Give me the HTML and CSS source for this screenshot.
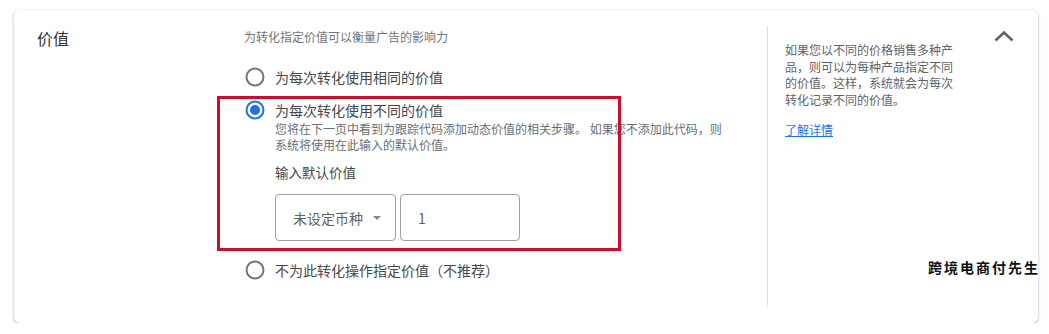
FILE: index.html
```html
<!DOCTYPE html>
<html lang="zh-CN">
<head>
<meta charset="utf-8">
<title>价值</title>
<link rel="stylesheet" href="styles.css">
</head>
<body>
<div class="card">
  <div class="label-col">价值</div>
  <div class="main">
    <div class="intro">为转化指定价值可以衡量广告的影响力</div>
    <div class="option opt1">
      <svg class="radio" viewBox="0 0 20 20" width="20" height="20"><circle cx="10" cy="10" r="8.5" fill="none" stroke="#757575" stroke-width="2"/></svg>
      <div class="opt-body"><div class="opt-label">为每次转化使用相同的价值</div></div>
    </div>
    <div class="option opt2">
      <svg class="radio" viewBox="0 0 20 20" width="20" height="20"><circle cx="10" cy="10" r="8.5" fill="none" stroke="#1a73e8" stroke-width="2"/><circle cx="10" cy="10" r="5" fill="#1a73e8"/></svg>
      <div class="opt-body">
        <div class="opt-label">为每次转化使用不同的价值</div>
        <div class="opt-desc">您将在下一页中看到为跟踪代码添加动态价值的相关步骤。 如果您不添加此代码，则<br>系统将使用在此输入的默认价值。</div>
        <div class="field-label">输入默认价值</div>
        <div class="fields">
          <div class="select"><span>未设定币种</span><span class="caret"></span></div>
          <div class="input">1</div>
        </div>
      </div>
    </div>
    <div class="option opt3">
      <svg class="radio" viewBox="0 0 20 20" width="20" height="20"><circle cx="10" cy="10" r="8.5" fill="none" stroke="#757575" stroke-width="2"/></svg>
      <div class="opt-body"><div class="opt-label">不为此转化操作指定价值（不推荐）</div></div>
    </div>
  </div>
  <div class="side">
    <div class="side-text">
      <p>如果您以不同的价格销售多种产品，则可以为每种产品指定不同的价值。这样，系统就会为每次转化记录不同的价值。</p>
      <a class="more" href="#">了解详情</a>
    </div>
    <svg class="chevron" viewBox="0 0 24 24" width="24" height="24"><path d="M3.5 15.5L12 7.5l8.5 8" fill="none" stroke="#5f6368" stroke-width="2.6"/></svg>
  </div>
  <div class="highlight"></div>
  <div class="watermark">跨境电商付先生</div>
</div>
</body>
</html>
```

FILE: styles.css
```css
html, body {
  margin: 0;
  padding: 0;
  background: #ffffff;
}
body {
  font-family: "Noto Sans CJK SC", "Noto Sans", "Liberation Sans", sans-serif;
  color: #202124;
  padding: 10px 0 0 14px;
}
.card {
  position: relative;
  box-sizing: border-box;
  width: 1024px;
  height: 313px;
  background: #fff;
  border-radius: 6px;
  box-shadow: 0 1px 2px rgba(60,64,67,0.28), 0 1px 3px 1px rgba(60,64,67,0.12);
  display: flex;
}
.label-col {
  width: 207px;
  padding: 17px 0 0 23px;
  font-size: 16px;
  line-height: 22px;
  color: #303134;
}
.main {
  width: 523px;
  padding-top: 18px;
}
.intro {
  font-size: 12px;
  line-height: 18px;
  color: #70757a;
}
.option {
  display: flex;
  align-items: flex-start;
}
.radio {
  flex: none;
  margin: 0 10px 0 1px;
}
.opt1 { margin-top: 21px; }
.opt2 { margin-top: 13px; }
.opt3 { margin-top: 19px; }
.opt-label {
  font-size: 14px;
  line-height: 20px;
  color: #45484c;
}
.opt-desc {
  margin-top: 1px;
  font-size: 12px;
  line-height: 16px;
  color: #6a6e73;
}
.field-label {
  margin-top: 9px;
  font-size: 13.5px;
  line-height: 20px;
  color: #45484c;
}
.fields {
  margin-top: 12px;
  display: flex;
  gap: 4px;
}
.select, .input {
  box-sizing: border-box;
  height: 47px;
  border: 1px solid #9aa0a6;
  border-radius: 4px;
  display: flex;
  align-items: center;
  font-size: 14px;
  color: #5f6368;
}
.select {
  width: 121px;
  padding-left: 17px;
}
.caret {
  margin-left: 10px;
  width: 0;
  height: 0;
  border-left: 4.5px solid transparent;
  border-right: 4.5px solid transparent;
  border-top: 4.5px solid #80868b;
}
.input {
  width: 120px;
  padding-left: 17px;
  color: #5f6368;
}
.side {
  flex: 1;
  margin: 16px 0;
  border-left: 1px solid #e0e0e0;
  display: flex;
  padding-left: 17px;
}
.side-text {
  width: 176px;
  padding-top: 16px;
}
.side-text p {
  margin: 0;
  font-size: 12px;
  line-height: 16.5px;
  color: #5f6368;
}
.more {
  display: inline-block;
  margin-top: 14px;
  font-size: 12px;
  line-height: 16.5px;
  color: #1a73e8;
  text-decoration: underline;
}
.chevron {
  margin: -1px 22px 0 auto;
}
.highlight {
  position: absolute;
  left: 203px;
  top: 86px;
  width: 398px;
  height: 149px;
  border: 3px solid #c8102e;
  pointer-events: none;
}
.watermark {
  position: absolute;
  right: -2px;
  top: 247px;
  font-size: 14px;
  font-weight: 700;
  letter-spacing: 2px;
  line-height: 20px;
  color: #111;
}
```
